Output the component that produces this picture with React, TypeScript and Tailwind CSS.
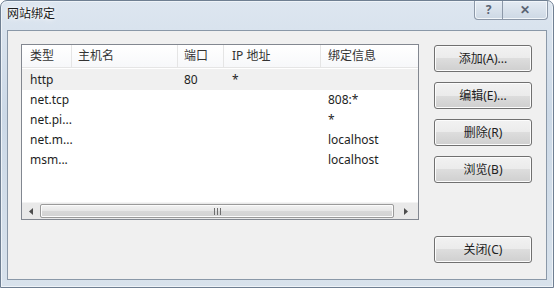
import React from 'react'

const font = { fontFamily: '"Noto Sans", "Noto Sans CJK SC", sans-serif' }

const cols = [
  { label: '类型', w: 'w-[50px]', pl: 'pl-[8px]' },
  { label: '主机名', w: 'w-[106px]', pl: 'pl-[6px]' },
  { label: '端口', w: 'w-[46px]', pl: 'pl-[6px]' },
  { label: 'IP 地址', w: 'w-[97px]', pl: 'pl-[8px]' },
  { label: '绑定信息', w: 'flex-1', pl: 'pl-[7px]' },
]

const rows = [
  ['http', '', '80', '*', ''],
  ['net.tcp', '', '', '', '808:*'],
  ['net.pi...', '', '', '', '*'],
  ['net.m...', '', '', '', 'localhost'],
  ['msm...', '', '', '', 'localhost'],
]

function Btn({ children }: { children: React.ReactNode }) {
  return (
    <button className="w-[98px] h-[27px] rounded-[3px] border border-[#707070] bg-[linear-gradient(#f2f2f2_0%,#ebebeb_50%,#dddddd_50%,#cfcfcf_100%)] shadow-[inset_0_0_0_1px_#fcfcfc] text-[12px] text-[#1e1e1e] flex items-center justify-center">
      {children}
    </button>
  )
}

export default function App() {
  return (
    <div
      className="w-[554px] h-[288px] rounded-t-[7px] border border-[#6f7f92] bg-[linear-gradient(180deg,#dde6f0_0%,#ccd9e7_40%,#d8e2ec_100%)] shadow-[inset_0_0_0_1px_#eef3f8] flex flex-col overflow-hidden text-black"
      style={font}
    >
      {/* Title bar */}
      <div className="h-[29px] flex items-start justify-between pl-[6px] pr-[5px]">
        <span className="mt-[4px] text-[12px] text-[#1a1a1a] [text-shadow:0_0_6px_#fff,0_0_3px_#fff]">网站绑定</span>
        <div className="flex h-[19px] border border-t-0 border-[#8c98a8] rounded-b-[4px] overflow-hidden bg-[linear-gradient(#e4ebf3,#cdd8e4)] shadow-[inset_0_0_0_1px_#f2f6fa]">
          <div className="w-[28px] flex items-center justify-center text-[12px] font-bold text-[#5a6473] border-r border-[#8c98a8]">?</div>
          <div className="w-[44px] flex items-center justify-center text-[12px] font-bold text-[#5a6473]">✕</div>
        </div>
      </div>

      {/* Client area */}
      <div className="mx-[6px] mb-[7px] flex-1 bg-[#f0f0f0] border border-[#8a98a8] flex pl-[13px] pr-[14px] pt-[13px] pb-[16px] gap-[15px]">
        {/* List view */}
        <div className="w-[398px] h-[176px] border border-[#828790] bg-white flex flex-col">
          <div className="h-[23px] flex border-b border-[#e5e5e5] bg-[linear-gradient(#ffffff,#f7f8fa)] text-[12px] text-[#333]">
            {cols.map((c, i) => (
              <div
                key={i}
                className={`${c.w} ${c.pl} flex items-center ${i < 4 ? 'border-r border-[#e5e5e5]' : ''}`}
              >
                {c.label}
              </div>
            ))}
          </div>
          <div className="flex-1 flex flex-col pt-[1px]">
            {rows.map((r, ri) => (
              <div
                key={ri}
                className={`flex text-[12px] text-[#1e1e1e] ${ri === 0 ? 'h-[21px] bg-[#f0f0f0]' : 'h-[20px]'}`}
              >
                {r.map((cell, ci) => (
                  <div key={ci} className={`${cols[ci].w} ${cols[ci].pl} flex items-center`}>
                    {cell}
                  </div>
                ))}
              </div>
            ))}
          </div>
          {/* Horizontal scrollbar */}
          <div className="h-[17px] flex bg-[#e9e9e9] border-t border-[#f4f4f4]">
            <div className="w-[18px] flex items-center justify-center">
              <svg width="4" height="7" viewBox="0 0 4 7"><path d="M4 0 L0 3.5 L4 7 Z" fill="#4d4d4d" /></svg>
            </div>
            <div className="flex-1 my-[1px] rounded-[2px] border border-[#9a9a9a] bg-[linear-gradient(#f3f3f3_0%,#e6e6e6_50%,#d8d8d8_50%,#d2d2d2_100%)] shadow-[inset_0_0_0_1px_#fbfbfb] flex items-center justify-center">
              <svg width="7" height="7" viewBox="0 0 7 7">
                <path d="M0.5 0 V7 M3.5 0 V7 M6.5 0 V7" stroke="#6e6e6e" strokeWidth="1" />
              </svg>
            </div>
            <div className="w-[24px] flex items-center justify-center">
              <svg width="4" height="7" viewBox="0 0 4 7"><path d="M0 0 L4 3.5 L0 7 Z" fill="#4d4d4d" /></svg>
            </div>
          </div>
        </div>

        {/* Buttons */}
        <div className="flex flex-col justify-between pt-[1px]">
          <div className="flex flex-col gap-[10px]">
            <Btn>添加(A)...</Btn>
            <Btn>编辑(E)...</Btn>
            <Btn>删除(R)</Btn>
            <Btn>浏览(B)</Btn>
          </div>
          <Btn>关闭(C)</Btn>
        </div>
      </div>
    </div>
  )
}
